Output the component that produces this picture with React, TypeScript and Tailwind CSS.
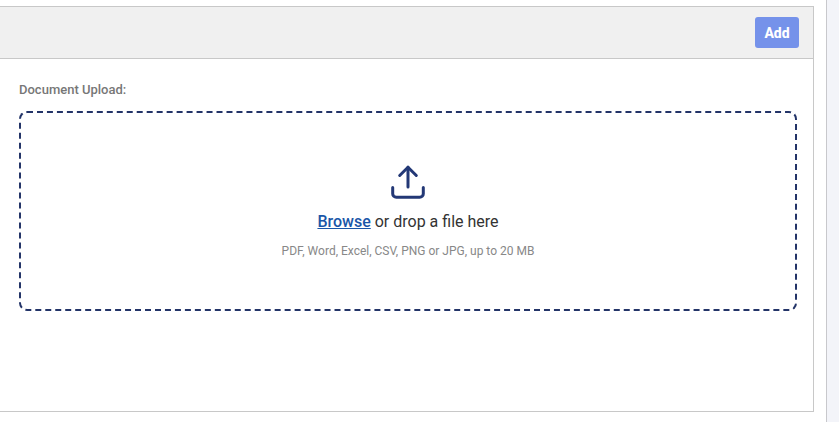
import { useRef, useState } from 'react';

const UploadIcon = () => (
  <svg
    width="36"
    height="36"
    viewBox="0 0 36 36"
    fill="none"
    stroke="#233876"
    strokeWidth="3"
    strokeLinecap="round"
    strokeLinejoin="round"
    aria-hidden="true"
  >
    <path d="M18 23V3.2" />
    <path d="M9.7 11.5L18 3.2l8.3 8.3" />
    <path d="M2.7 23.5v6.2a3.6 3.6 0 0 0 3.6 3.6h23.4a3.6 3.6 0 0 0 3.6-3.6v-6.2" />
  </svg>
);

const FileDropzone = () => {
  const inputRef = useRef<HTMLInputElement>(null);
  const [, setFile] = useState<File | null>(null);

  const handleDrop = (e: React.DragEvent) => {
    e.preventDefault();
    setFile(e.dataTransfer.files[0] ?? null);
  };

  return (
    <div
      onDragOver={(e) => e.preventDefault()}
      onDrop={handleDrop}
      className="flex flex-col items-center rounded-lg border-2 border-dashed border-[#233468] pt-[51px] pb-[49px]"
    >
      <UploadIcon />
      <p className="mt-2.5 text-base leading-6 text-[#333333]">
        <button
          type="button"
          onClick={() => inputRef.current?.click()}
          className="cursor-pointer font-medium text-[#1a56a8] underline"
        >
          Browse
        </button>{' '}
        or drop a file here
      </p>
      <p className="mt-2 text-xs leading-[18px] text-[#888888]">PDF, Word, Excel, CSV, PNG or JPG, up to 20 MB</p>
      <input
        ref={inputRef}
        id="document"
        type="file"
        accept=".pdf,.doc,.docx,.xls,.xlsx,.csv,.png,.jpg"
        onChange={(e) => setFile(e.target.files?.[0] ?? null)}
        className="hidden"
      />
    </div>
  );
};

const App = () => {
  return (
    <div className="min-h-screen bg-[#f3f4f9] pr-3 font-['Roboto',sans-serif]">
      <main className="min-h-screen border-r border-[#c8c8cc] bg-white pt-1.5 pr-3">
        <section className="border-y border-r border-[#c8c8c8]">
          {/* Header */}
          <div className="flex h-[52px] items-center justify-end border-b border-[#c8c8c8] bg-[#f0f0f0] pr-3.5">
            <button
              type="button"
              className="h-[31px] w-11 rounded-[3px] bg-[#7592ea] text-sm leading-5 font-extrabold text-white"
            >
              Add
            </button>
          </div>

          {/* Upload */}
          <div className="pt-5 pr-4 pb-25 pl-[19px]">
            <label htmlFor="document" className="mb-2.5 block text-[13px] leading-[22px] font-medium text-[#777777]">
              Document Upload:
            </label>
            <FileDropzone />
          </div>
        </section>
      </main>
    </div>
  );
};

export default App;
